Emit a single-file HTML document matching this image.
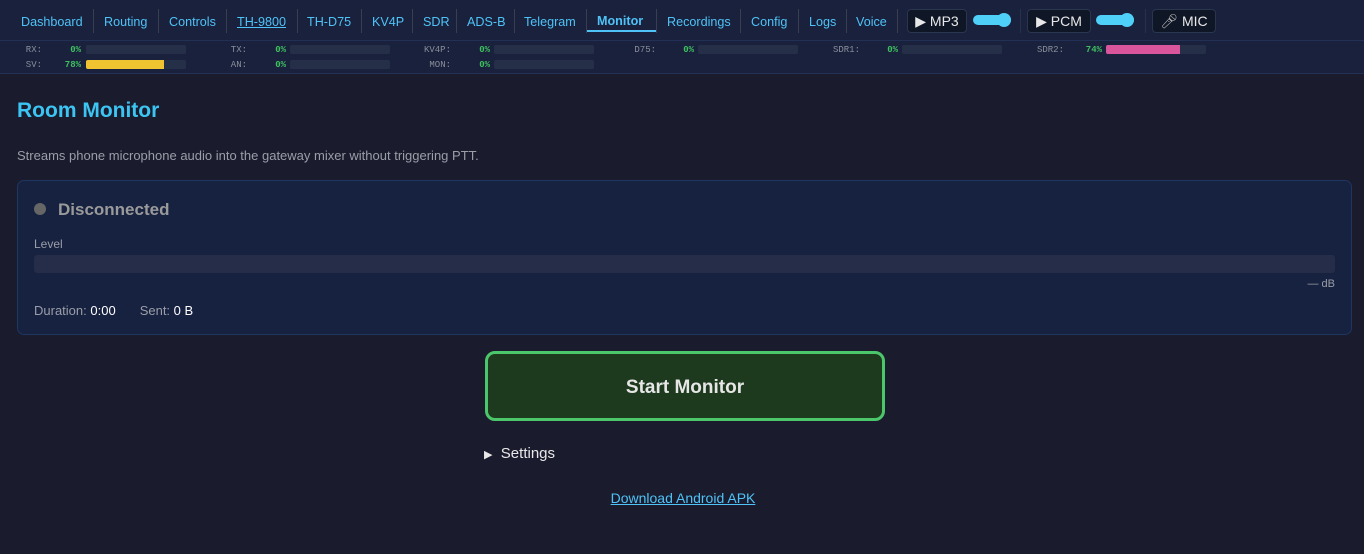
<!DOCTYPE html>
<html><head><meta charset="utf-8"><style>
*{margin:0;padding:0;box-sizing:border-box}
body{width:1364px;height:554px;background:#1a1b2d;font-family:"Liberation Sans","DejaVu Sans",sans-serif;position:relative;overflow:hidden}
.a{position:absolute;white-space:nowrap}
#nav{position:absolute;left:0;top:0;width:1364px;height:41px;background:#19213d;border-bottom:1px solid #223056}
.n{position:absolute;top:14px;font-size:12.6px;color:#4fc3f7;line-height:16px}
.sep{position:absolute;top:9px;width:1px;height:24px;background:#3a3f50}
.btn{position:absolute;top:9px;height:24px;background:#0f1626;border:1px solid #2a3550;border-radius:4px;color:#e8e8e8;font-size:14px;line-height:23px;text-align:center}
.sl{position:absolute;top:15px;height:10px;background:#4fd0f8;border-radius:5px}
.kn{position:absolute;top:13px;width:14px;height:14px;border-radius:7px;background:#4fd0f8}
#st{position:absolute;left:0;top:41px;width:1364px;height:33px;background:#19213d;border-bottom:1px solid #223056}
.l{position:absolute;font-family:"Liberation Mono",monospace;font-size:9px;color:#8a8f9a;text-align:right;width:40px;line-height:10px}
.v{position:absolute;font-family:"Liberation Mono",monospace;font-size:9px;color:#3fbf5f;font-weight:bold;text-align:right;width:30px;line-height:10px}
.b{position:absolute;width:100px;height:9px;background:#262f48;border-radius:2px;overflow:hidden}
.b i{display:block;height:9px}
</style></head><body>
<div id="nav">
<span class="n" style="left:21px">Dashboard</span><div class="sep" style="left:93px"></div>
<span class="n" style="left:104px">Routing</span><div class="sep" style="left:158px"></div>
<span class="n" style="left:169px">Controls</span><div class="sep" style="left:226px"></div>
<span class="n" style="left:237px;text-decoration:underline">TH-9800</span><div class="sep" style="left:297px"></div>
<span class="n" style="left:307px">TH-D75</span><div class="sep" style="left:361px"></div>
<span class="n" style="left:372px">KV4P</span><div class="sep" style="left:412px"></div>
<span class="n" style="left:423px">SDR</span><div class="sep" style="left:456px"></div>
<span class="n" style="left:467px">ADS-B</span><div class="sep" style="left:514px"></div>
<span class="n" style="left:524px">Telegram</span><div class="sep" style="left:586px"></div>
<span class="n" style="left:597px;font-weight:bold;top:13px">Monitor</span><div class="a" style="left:587px;top:30px;width:69px;height:2px;background:#4fc3f7"></div><div class="sep" style="left:656px"></div>
<span class="n" style="left:667px">Recordings</span><div class="sep" style="left:740px"></div>
<span class="n" style="left:751px">Config</span><div class="sep" style="left:798px"></div>
<span class="n" style="left:809px">Logs</span><div class="sep" style="left:846px"></div>
<span class="n" style="left:856px">Voice</span><div class="sep" style="left:897px"></div>
<div class="btn" style="left:907px;width:60px">▶ MP3</div>
<div class="sl" style="left:973px;width:38px"></div><div class="kn" style="left:997px"></div>
<div class="sep" style="left:1020px;background:#26324a"></div>
<div class="btn" style="left:1027px;width:64px">▶ PCM</div>
<div class="sl" style="left:1096px;width:38px"></div><div class="kn" style="left:1120px"></div>
<div class="sep" style="left:1145px;background:#26324a"></div>
<div class="btn" style="left:1152px;width:64px"><span style="color:#bbb">🎤︎</span> MIC</div>
</div>
<div id="st">
<span class="l" style="left:2px;top:4px">RX:</span><span class="v" style="left:51px;top:4px">0%</span><div class="b" style="left:86px;top:4px"></div>
<span class="l" style="left:2px;top:19px">SV:</span><span class="v" style="left:51px;top:19px">78%</span><div class="b" style="left:86px;top:19px"><i style="width:78%;background:#f0c430"></i></div>
<span class="l" style="left:207px;top:4px">TX:</span><span class="v" style="left:256px;top:4px">0%</span><div class="b" style="left:290px;top:4px"></div>
<span class="l" style="left:207px;top:19px">AN:</span><span class="v" style="left:256px;top:19px">0%</span><div class="b" style="left:290px;top:19px"></div>
<span class="l" style="left:411px;top:4px">KV4P:</span><span class="v" style="left:460px;top:4px">0%</span><div class="b" style="left:494px;top:4px"></div>
<span class="l" style="left:411px;top:19px">MON:</span><span class="v" style="left:460px;top:19px">0%</span><div class="b" style="left:494px;top:19px"></div>
<span class="l" style="left:616px;top:4px">D75:</span><span class="v" style="left:664px;top:4px">0%</span><div class="b" style="left:698px;top:4px"></div>
<span class="l" style="left:820px;top:4px">SDR1:</span><span class="v" style="left:868px;top:4px">0%</span><div class="b" style="left:902px;top:4px"></div>
<span class="l" style="left:1024px;top:4px">SDR2:</span><span class="v" style="left:1072px;top:4px">74%</span><div class="b" style="left:1106px;top:4px"><i style="width:74%;background:#d9569c"></i></div>
</div>
<div class="a" style="left:17px;top:99px;font-size:21px;font-weight:bold;color:#3cc4f2">Room Monitor</div>
<div class="a" style="left:17px;top:148px;font-size:13px;color:#9a9ea8">Streams phone microphone audio into the gateway mixer without triggering PTT.</div>
<div class="a" style="left:17px;top:180px;width:1335px;height:155px;background:#172140;border:1px solid #1e3660;border-radius:7px"></div>
<div class="a" style="left:34px;top:203px;width:12px;height:12px;border-radius:6px;background:#666"></div>
<div class="a" style="left:58px;top:200px;font-size:17px;font-weight:bold;color:#9a9a9a">Disconnected</div>
<div class="a" style="left:34px;top:237px;font-size:12px;color:#9a9ea8">Level</div>
<div class="a" style="left:34px;top:255px;width:1301px;height:18px;background:#252d48;border-radius:3px"></div>
<div class="a" style="left:1290px;top:278px;width:45px;text-align:right;font-size:11px;color:#9a9ea8">— dB</div>
<div class="a" style="left:34px;top:303px;font-size:13px;color:#9a9ea8">Duration: <span style="color:#fff">0:00</span><span style="display:inline-block;width:24px"></span>Sent: <span style="color:#fff">0 B</span></div>
<div class="a" style="left:485px;top:351px;width:400px;height:70px;background:#1e3a1e;border:3px solid #4cc66a;border-radius:10px;color:#e6e6e6;font-size:19px;font-weight:bold;text-align:center;line-height:67px">Start Monitor</div>
<div class="a" style="left:484px;top:445px;font-size:15px;color:#e8e8e8"><span style="font-size:11px">▶</span>&nbsp; Settings</div>
<div class="a" style="left:0;width:1364px;text-align:center;top:490px;font-size:14px;color:#4fc3f7;text-decoration:underline"><span style="margin-left:2px">Download Android APK</span></div>
</body></html>
